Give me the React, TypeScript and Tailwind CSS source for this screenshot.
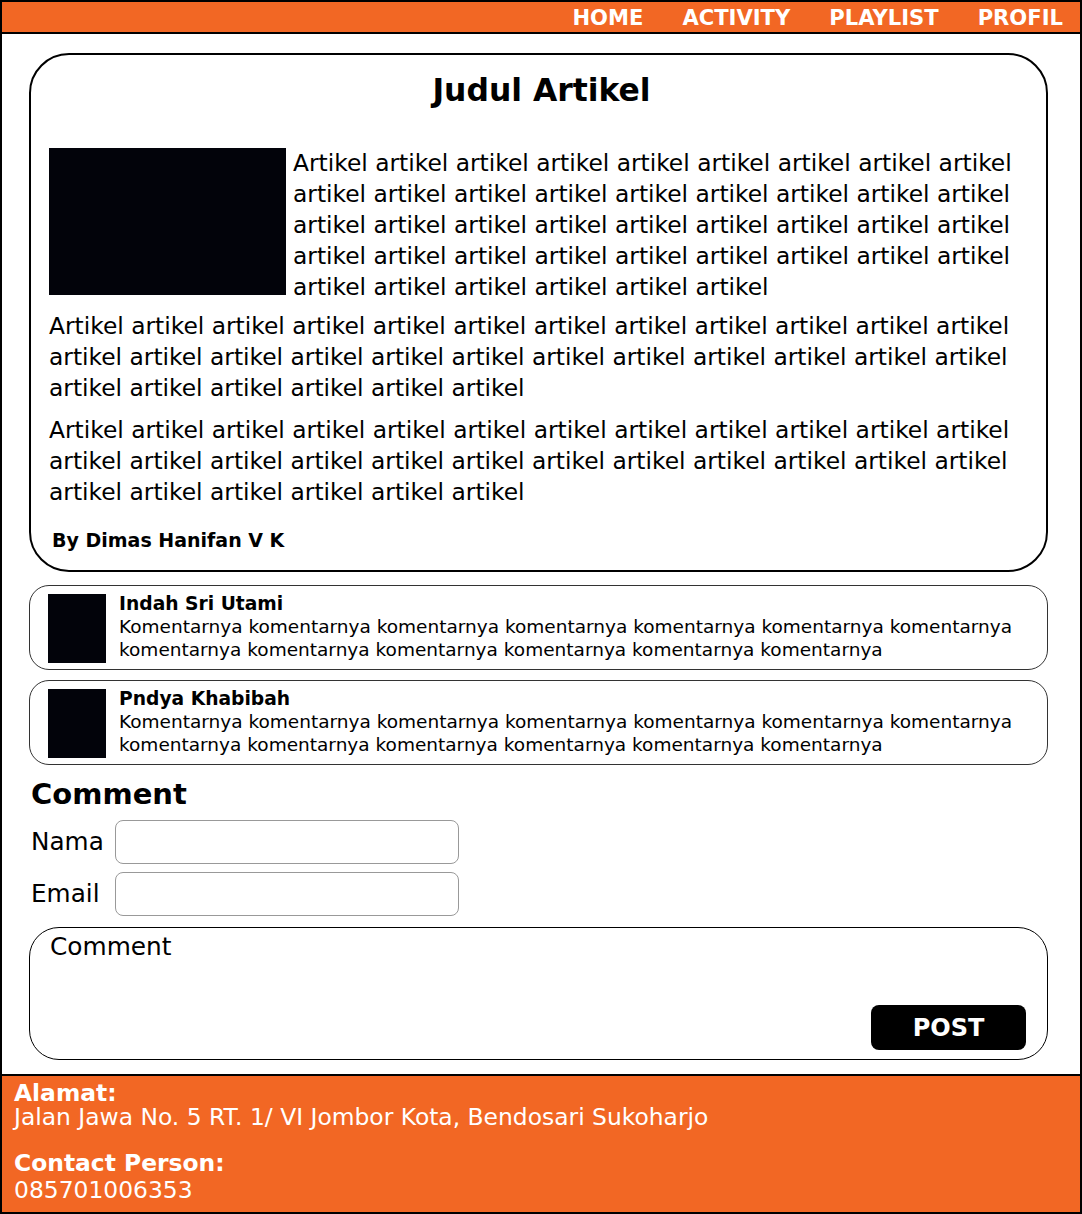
const ARTIKEL_1 = ['Artikel', ...Array(41).fill('artikel')].join(' ');
const ARTIKEL_2 = ['Artikel', ...Array(29).fill('artikel')].join(' ');
const KOMENTAR = ['Komentarnya', ...Array(12).fill('komentarnya')].join(' ');

const NAV = ['HOME', 'ACTIVITY', 'PLAYLIST', 'PROFIL'];

const COMMENTS = [
  { name: 'Indah Sri Utami', text: KOMENTAR },
  { name: 'Pndya Khabibah', text: KOMENTAR },
];

function CommentCard({ name, text }: { name: string; text: string }) {
  return (
    <div className="w-[1019px] h-[85px] border border-[#333] rounded-[20px] flex items-start pl-[18px] pt-[8px]">
      <div className="w-[58px] h-[69px] shrink-0 bg-[#02030a]" />
      <div className="ml-[13px] -mt-[2px]">
        <div className="text-[18.7px] leading-[23px] font-bold">{name}</div>
        <p className="text-[18.5px] leading-[23px] w-[900px]">{text}</p>
      </div>
    </div>
  );
}

export default function App() {
  return (
    <div className="w-[1082px] h-[1214px] border-2 border-black flex flex-col font-['DejaVu_Sans',sans-serif] text-black bg-white">
      {/* header */}
      <div className="h-[32px] shrink-0 bg-[#f26724] border-b-2 border-black flex items-center justify-end gap-[39px] pr-[17px] pt-[2px]">
        {NAV.map((n) => (
          <span key={n} className="text-white font-bold text-[21.1px] leading-none">
            {n}
          </span>
        ))}
      </div>

      {/* body */}
      <div className="h-[1040px] shrink-0 pl-[27px] pt-[19px] flex flex-col">
        <div className="w-[1019px] border-2 border-black rounded-[40px] px-[18px] pt-[17px] pb-[19px]">
          <h1 className="text-[31.4px] leading-[36px] font-bold text-center pl-[6px]">Judul Artikel</h1>
          <div className="flex items-start gap-[7px] mt-[40px]">
            <div className="w-[237px] h-[147px] shrink-0 bg-[#02030a]" />
            <p className="text-[23.35px] leading-[31px]">{ARTIKEL_1}</p>
          </div>
          <p className="text-[23.35px] leading-[31px] mt-[8px]">{ARTIKEL_2}</p>
          <p className="text-[23.35px] leading-[31px] mt-[11px]">{ARTIKEL_2}</p>
          <div className="text-[19px] leading-[22px] font-bold mt-[21px] pl-[3px]">By Dimas Hanifan V K</div>
        </div>

        <div className="flex flex-col gap-[10px] mt-[13px]">
          {COMMENTS.map((c) => (
            <CommentCard key={c.name} {...c} />
          ))}
        </div>

        <h2 className="text-[29px] leading-[34px] font-bold mt-[12px] pl-[2px]">Comment</h2>

        <div className="flex flex-col gap-[8px] mt-[9px] pl-[2px]">
          {['Nama', 'Email'].map((l) => (
            <div key={l} className="flex items-center">
              <span className="w-[84px] text-[24.7px] leading-[28px]">{l}</span>
              <div className="w-[344px] h-[44px] border border-[#999] rounded-[8px]" />
            </div>
          ))}
        </div>

        <div className="w-[1019px] h-[133px] mt-[11px] border border-black rounded-[30px] flex flex-col pl-[20px] pr-[21px] pt-[5px] pb-[9px]">
          <span className="text-[24.8px] leading-[28px]">Comment</span>
          <button className="mt-auto self-end w-[155px] h-[45px] bg-black rounded-[8px] text-white font-bold text-[24px] leading-none">
            POST
          </button>
        </div>
      </div>

      {/* footer */}
      <div className="flex-1 bg-[#f26724] border-t-2 border-black text-white pl-[12px] pt-[5px]">
        <div className="text-[23.4px] leading-[24px] font-bold">Alamat:</div>
        <div className="text-[23.4px] leading-[24px]">Jalan Jawa No. 5 RT. 1/ VI Jombor Kota, Bendosari Sukoharjo</div>
        <div className="text-[23.4px] leading-[24px] font-bold mt-[22px]">Contact Person:</div>
        <div className="text-[23.4px] leading-[24px] mt-[3px]">085701006353</div>
      </div>
    </div>
  );
}
